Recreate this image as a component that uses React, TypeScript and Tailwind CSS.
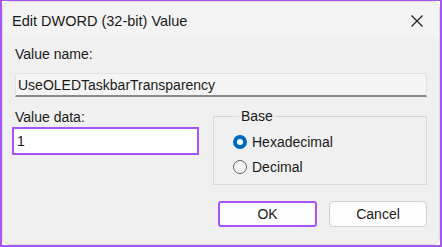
// Edit DWORD (32-bit) Value — Windows 11 registry editor dialog

const FONT = { fontFamily: '"Segoe UI", "Liberation Sans", Arial, sans-serif' };

function CloseIcon() {
  return (
    <svg width="12" height="12" viewBox="0 0 12 12" aria-hidden="true">
      <path d="M0.5 0.5 L11.5 11.5 M11.5 0.5 L0.5 11.5" stroke="#1a1a1a" strokeWidth="1.1" fill="none" />
    </svg>
  );
}

function Radio({ checked, label }: { checked?: boolean; label: string }) {
  return (
    <label className="flex items-center gap-[5px] h-[20px]">
      {checked ? (
        <span className="w-[14px] h-[14px] rounded-full bg-[#0067c0] flex items-center justify-center">
          <span className="w-[6px] h-[6px] rounded-full bg-white" />
        </span>
      ) : (
        <span className="w-[14px] h-[14px] rounded-full border border-[#5f5f5f] bg-[#f5f5f5]" />
      )}
      <span className="text-[14px] leading-[18px] text-[#1a1a1a]">{label}</span>
    </label>
  );
}

export default function App() {
  return (
    <div
      className="w-[442px] h-[247px] bg-white border-x-2 border-b-2 border-t border-[#a855f7] overflow-hidden"
      style={FONT}
    >
      <div className="h-full rounded-[8px] bg-[#f0f0f0] border border-[#dcdcdc] overflow-hidden flex flex-col">
        {/* Title bar */}
        <div className="h-[36px] bg-[#f3f3f3] flex items-center justify-between pl-[9px] pr-[16px] pt-[2px]">
          <span className="text-[14.5px] leading-[20px] text-[#1a1a1a]">Edit DWORD (32-bit) Value</span>
          <CloseIcon />
        </div>

        {/* Body */}
        <div className="flex flex-col px-[12px] pt-[7px]">
          <span className="text-[14px] leading-[18px] text-[#1a1a1a]">Value name:</span>
          <div className="mt-[10px] h-[24px] bg-[#f4f4f4] border border-[#e2e2e2] border-b-2 border-b-[#8a8a8a] rounded-t-[3px] flex items-center px-[2px]">
            <span className="text-[14px] leading-[18px] text-[#1a1a1a]">UseOLEDTaskbarTransparency</span>
          </div>

          <div className="mt-[11px] grid grid-cols-[184px_1fr] gap-x-[14px]">
            <div className="flex flex-col">
              <span className="text-[14px] leading-[18px] text-[#1a1a1a]">Value data:</span>
              <div className="-ml-[3px] mt-[1px] w-[187px] h-[28px] bg-white border-2 border-[#a855f7] flex items-center px-[3px]">
                <span className="text-[14px] leading-[18px] text-[#1a1a1a]">1</span>
              </div>
            </div>
            <fieldset className="border border-[#d9d9d9] h-[78px] -mt-[1px] px-[19px]">
              <legend className="ml-[6px] px-[2px] text-[14px] leading-[18px] text-[#1a1a1a]">Base</legend>
              <div className="flex flex-col gap-[5px] mt-[7px]">
                <Radio checked label="Hexadecimal" />
                <Radio label="Decimal" />
              </div>
            </fieldset>
          </div>

          <div className="mt-[16px] flex justify-end gap-[12px]">
            <button className="w-[99px] h-[26px] rounded-[3px] bg-[#fdfdfd] border-2 border-[#a855f7] text-[14px] text-[#1a1a1a]">
              OK
            </button>
            <button className="w-[98px] h-[26px] rounded-[4px] bg-[#fdfdfd] border border-[#d0d0d0] text-[14px] text-[#1a1a1a]">
              Cancel
            </button>
          </div>
        </div>
      </div>
    </div>
  );
}
